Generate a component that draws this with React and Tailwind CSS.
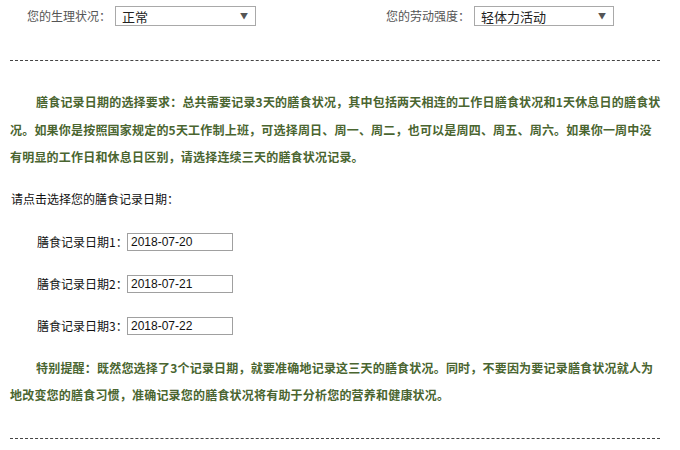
export default function App() {
  const cjk = { fontFamily: '"Noto Sans CJK SC", "Liberation Sans", sans-serif' }
  const dates = ['2018-07-20', '2018-07-21', '2018-07-22']

  const Select = ({ value, width }) => (
    <div
      className={`flex h-[20px] items-center justify-between border border-[#a9a9a9] bg-white pl-[6px] pr-[7px] ${width}`}
    >
      <span className="text-[13px] leading-none text-[#222]">{value}</span>
      <span className="text-[8px] leading-none text-[#555]">▼</span>
    </div>
  )

  return (
    <div className="h-[450px] w-[680px] overflow-hidden bg-white px-[10px]" style={cjk}>
      {/* top selectors */}
      <div className="flex items-center pt-[6px]">
        <div className="flex items-center pl-[17px]">
          <span className="text-[12px] text-[#555]">您的生理状况：</span>
          <div className="ml-[4px]">
            <Select value="正常" width="w-[141px]" />
          </div>
        </div>
        <div className="ml-[130px] flex items-center">
          <span className="text-[12px] text-[#555]">您的劳动强度：</span>
          <div className="ml-[4px]">
            <Select value="轻体力活动" width="w-[140px]" />
          </div>
        </div>
      </div>

      <div className="mr-[10px] mt-[34px] border-t border-dashed border-[#444]" />

      <p className="mt-[27px] whitespace-nowrap indent-[26px] text-[12px] font-bold leading-[27.5px] tracking-[0.2px] text-[#4a6530]">
        膳食记录日期的选择要求：总共需要记录3天的膳食状况，其中包括两天相连的工作日膳食状况和1天休息日的膳食状
        <br />
        况。如果你是按照国家规定的5天工作制上班，可选择周日、周一、周二，也可以是周四、周五、周六。如果你一周中没
        <br />
        有明显的工作日和休息日区别，请选择连续三天的膳食状况记录。
      </p>

      <p className="mt-[18px] pl-[1px] text-[12px] leading-[20px] text-[#111]">请点击选择您的膳食记录日期：</p>

      <div className="mt-[24px] flex flex-col gap-[24px] pl-[27px]">
        {dates.map((d, i) => (
          <div key={d} className="flex h-[18px] items-center">
            <span className="w-[90px] shrink-0 whitespace-nowrap text-[12px] text-[#111]">膳食记录日期{i + 1}：</span>
            <div
              className="flex h-[18px] w-[106px] items-center border border-[#a0a0a0] pl-[3px] text-[12px] text-[#111]"
              style={{ fontFamily: '"Liberation Sans", sans-serif' }}
            >
              {d}
            </div>
          </div>
        ))}
      </div>

      <p className="mt-[19px] whitespace-nowrap indent-[26px] text-[12px] font-bold leading-[27.5px] tracking-[0.2px] text-[#4a6530]">
        特别提醒：既然您选择了3个记录日期，就要准确地记录这三天的膳食状况。同时，不要因为要记录膳食状况就人为
        <br />
        地改变您的膳食习惯，准确记录您的膳食状况将有助于分析您的营养和健康状况。
      </p>

      <div className="mr-[10px] mt-[29px] border-t border-dashed border-[#444]" />
    </div>
  )
}
